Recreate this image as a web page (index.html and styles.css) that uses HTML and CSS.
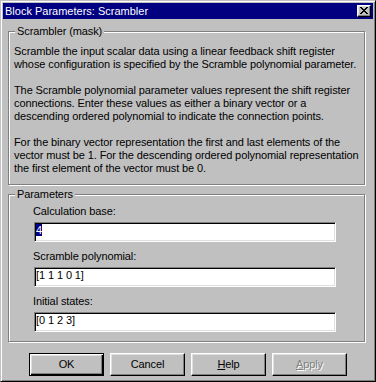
FILE: index.html
```html
<!DOCTYPE html>
<html>
<head>
<meta charset="utf-8">
<link rel="stylesheet" href="styles.css">
</head>
<body>
<div class="window">
  <div class="titlebar">
    <span class="title">Block Parameters: Scrambler</span>
    <div class="close">
      <svg width="8" height="7" viewBox="0 0 8 7" shape-rendering="crispEdges">
        <rect x="0" y="0" width="2" height="1"/><rect x="6" y="0" width="2" height="1"/>
        <rect x="1" y="1" width="2" height="1"/><rect x="5" y="1" width="2" height="1"/>
        <rect x="2" y="2" width="4" height="1"/>
        <rect x="3" y="3" width="2" height="1"/>
        <rect x="2" y="4" width="4" height="1"/>
        <rect x="1" y="5" width="2" height="1"/><rect x="5" y="5" width="2" height="1"/>
        <rect x="0" y="6" width="2" height="1"/><rect x="6" y="6" width="2" height="1"/>
      </svg>
    </div>
  </div>
  <div class="body">
    <div class="group group-desc">
      <div class="legend">Scrambler (mask)</div>
      <div class="desc">
        <p>Scramble the input scalar data using a linear feedback shift register<br>whose configuration is specified by the Scramble polynomial parameter.</p>
        <p>The Scramble polynomial parameter values represent the shift register<br>connections. Enter these values as either a binary vector or a<br>descending ordered polynomial to indicate the connection points.</p>
        <p>For the binary vector representation the first and last elements of the<br>vector must be 1. For the descending ordered polynomial representation<br>the first element of the vector must be 0.</p>
      </div>
    </div>
    <div class="group group-params">
      <div class="legend">Parameters</div>
      <div class="fields">
        <div class="field">
          <div class="label">Calculation base:</div>
          <div class="edit"><span class="sel">4</span></div>
        </div>
        <div class="field">
          <div class="label">Scramble polynomial:</div>
          <div class="edit">[1 1 1 0 1]</div>
        </div>
        <div class="field">
          <div class="label">Initial states:</div>
          <div class="edit">[0 1 2 3]</div>
        </div>
      </div>
    </div>
    <div class="buttons">
      <div class="btn btn-default">OK</div>
      <div class="btn">Cancel</div>
      <div class="btn"><span><u>H</u>elp</span></div>
      <div class="btn btn-disabled"><span><u>A</u>pply</span></div>
    </div>
  </div>
</div>
</body>
</html>
```

FILE: styles.css
```css
* { box-sizing: border-box; }
html, body { margin: 0; padding: 0; background: #c0c0c0; }
body {
  font-family: "Liberation Sans", Arial, sans-serif;
  font-size: 11px;
  line-height: 13px;
  letter-spacing: -0.1px;
  color: #000;
}
.window {
  width: 376px;
  height: 382px;
  border: 1px solid;
  border-color: #c0c0c0 #000 #000 #c0c0c0;
  box-shadow: inset 1px 1px 0 #fff, inset -1px -1px 0 #808080;
  padding: 2px;
  background: #c0c0c0;
  display: flex;
  flex-direction: column;
}
.titlebar {
  height: 16px;
  background: #000080;
  color: #fff;
  display: flex;
  align-items: center;
  justify-content: space-between;
  padding: 0 2px 0 2px;
}
.title { white-space: nowrap; letter-spacing: 0; }
.close {
  width: 14px;
  height: 12px;
  background: #c0c0c0;
  border: 1px solid;
  border-color: #fff #000 #000 #fff;
  box-shadow: inset -1px -1px 0 #808080, inset 1px 1px 0 #dfdfdf;
  display: flex;
  align-items: center;
  justify-content: center;
  padding-bottom: 1px;
}
.close svg { display: block; fill: #000; }
.body {
  padding: 0 0 0 5px;
  display: flex;
  flex-direction: column;
}
.group {
  width: 357px;
  border: 1px solid #808080;
  box-shadow: inset 1px 1px 0 #fff, 1px 1px 0 #fff;
}
.group-desc { margin-top: 12px; }
.group-params { margin-top: 9px; }
.legend {
  width: max-content;
  margin: -7px 0 0 6px;
  padding: 0 2px;
  background: #c0c0c0;
  white-space: nowrap;
}
.desc { padding: 7px 0 9px 5px; white-space: nowrap; }
.desc p { margin: 0 0 13px 0; }
.desc p:last-child { margin-bottom: 0; }
.fields {
  padding: 4px 0 9px 25px;
  display: flex;
  flex-direction: column;
  gap: 8px;
}
.field { display: flex; flex-direction: column; gap: 4px; }
.label { margin-left: -1px; }
.edit {
  width: 302px;
  height: 20px;
  background: #fff;
  border: 1px solid;
  border-color: #808080 #fff #fff #808080;
  box-shadow: inset 1px 1px 0 #000, inset -1px -1px 0 #dfdfdf;
  padding: 1px 1px 0 1px;
  white-space: nowrap;
}
.sel { background: #000080; color: #fff; }
.buttons {
  margin-top: 11px;
  padding-left: 21px;
  display: flex;
  gap: 6px;
}
.btn {
  width: 75px;
  height: 23px;
  border: 1px solid;
  border-color: #fff #000 #000 #fff;
  box-shadow: inset -1px -1px 0 #808080, inset 1px 1px 0 #dfdfdf;
  display: flex;
  align-items: center;
  justify-content: center;
}
.btn-default {
  border-color: #000;
  box-shadow: inset 1px 1px 0 #fff, inset -1px -1px 0 #000, inset -2px -2px 0 #808080, inset 2px 2px 0 #dfdfdf;
}
.btn-disabled { color: #808080; text-shadow: 1px 1px 0 #fff; }
```
